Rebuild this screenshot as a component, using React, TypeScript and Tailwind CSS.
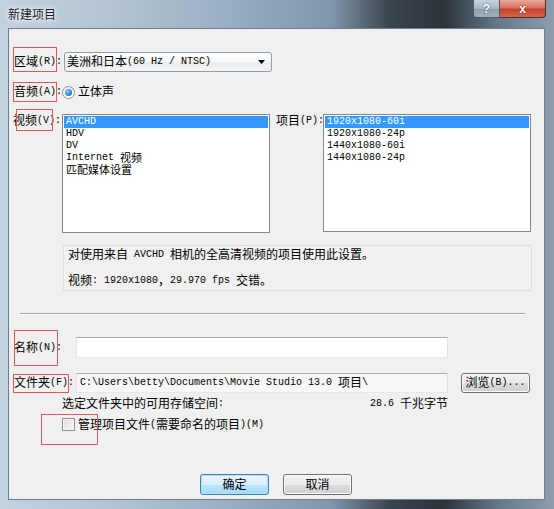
import React from "react";

const CJK = /([\u2E80-\u9FFF\u3000-\u303F\uFF00-\uFFEF]+)/;
const CJK_TEST = /^[\u2E80-\u9FFF\u3000-\u303F\uFF00-\uFFEF]+$/;

function Mix({ t, small }: { t: string; small?: boolean }) {
  return (
    <span className="inline-flex items-center whitespace-nowrap h-[12px]">
      {t
        .split(CJK)
        .filter((p) => p.length > 0)
        .map((p, i) =>
          CJK_TEST.test(p) ? (
            <span
              key={i}
              className={
                small
                  ? "relative -top-[1px] font-['Noto_Sans_CJK_SC',sans-serif] text-[11px] leading-[11px]"
                  : "relative -top-[1px] font-['Noto_Sans_CJK_SC',sans-serif] text-[12px] leading-[12px]"
              }
            >
              {p}
            </span>
          ) : (
            <span key={i} className="font-['Liberation_Mono',monospace] text-[10px] leading-[12px] whitespace-pre">
              {p}
            </span>
          )
        )}
    </span>
  );
}

function RedBox({ cls }: { cls: string }) {
  return <div className={"absolute border border-[#e05a5a] pointer-events-none " + cls} />;
}

function ListBox({ items, w, h }: { items: string[]; w: string; h: string }) {
  return (
    <div className={"shrink-0 border border-[#828790] bg-white p-[1px] " + w + " " + h}>
      {items.map((it, i) => (
        <div
          key={i}
          className={
            i === 0
              ? "h-[12px] pl-[2px] bg-[#3399ff] text-white flex items-center"
              : "h-[12px] pl-[2px] text-black flex items-center"
          }
        >
          <Mix t={it} small />
        </div>
      ))}
    </div>
  );
}

function Btn({ label, primary }: { label: string; primary?: boolean }) {
  return (
    <div
      className={
        primary
          ? "w-[69px] h-[21px] rounded-[3px] border border-[#3c7fb1] bg-[linear-gradient(to_bottom,#eaf6fd_0%,#d9f0fc_50%,#bee6fd_51%,#a7d9f5_100%)] shadow-[inset_0_0_0_1px_#b5e3fb] flex items-center justify-center"
          : "w-[69px] h-[21px] rounded-[3px] border border-[#707070] bg-[linear-gradient(to_bottom,#f2f2f2_0%,#ebebeb_50%,#dddddd_51%,#cfcfcf_100%)] shadow-[inset_0_0_0_1px_#fcfcfc] flex items-center justify-center"
      }
    >
      <Mix t={label} />
    </div>
  );
}

export default function App() {
  return (
    <div className="relative w-[554px] h-[509px] overflow-hidden flex flex-col text-black bg-[linear-gradient(to_right,#c4d2df_0%,#b3c4d4_20%,#97adc1_42%,#7f95aa_60%,#3c4650_70%,#2b333b_80%,#66798b_90%,#8c9dae_100%)]">
      {/* title bar */}
      <div className="h-[28px] flex items-start shrink-0">
        <div className="ml-[8px] mt-[7px] text-[12px] leading-[14px] font-['Noto_Sans_CJK_SC',sans-serif] text-[#1a1a1a] [text-shadow:0_0_6px_#ffffff,0_0_3px_#ffffff]">
          新建项目
        </div>
        <div className="ml-auto mr-[8px] flex">
          <div className="w-[27px] h-[18px] border border-[#4b5a69] border-t-0 rounded-bl-[4px] bg-[linear-gradient(to_bottom,#c7d3de_0%,#a7b6c4_50%,#8e9fae_51%,#9fb0be_100%)] flex items-center justify-center text-white text-[12px] font-bold font-['Liberation_Sans',sans-serif] [text-shadow:0_0_2px_#304050]">
            ?
          </div>
          <div className="w-[46px] h-[18px] border border-[#5b2a25] border-t-0 border-l-0 rounded-br-[4px] bg-[linear-gradient(to_bottom,#e9a99b_0%,#d9725f_45%,#c2402b_55%,#d3664d_100%)] flex items-center justify-center text-white text-[12px] font-bold font-['Liberation_Sans',sans-serif] [text-shadow:0_0_2px_#5a1a10]">
            x
          </div>
        </div>
      </div>

      {/* client area */}
      <div className="ml-[8px] w-[537px] h-[472px] shrink-0 border border-[#6d7d8c] bg-[#f0f0f0] flex flex-col">
        {/* region */}
        <div className="mt-[23px] h-[20px] flex items-center">
          <div className="w-[55px] shrink-0 pl-[5px] flex items-center">
            <Mix t="区域(R):" />
          </div>
          <div className="w-[208px] shrink-0 h-[20px] rounded-[3px] border border-[#8e9fb3] bg-[linear-gradient(to_bottom,#ffffff_0%,#f7f7f7_50%,#ececec_51%,#f3f3f3_100%)] flex items-center pl-[2px] pr-[6px]">
            <Mix t="美洲和日本(60 Hz / NTSC)" />
            <svg className="ml-auto" width="7" height="4" viewBox="0 0 7 4">
              <path d="M0 0 H7 L3.5 4 Z" fill="#000" />
            </svg>
          </div>
        </div>

        {/* audio */}
        <div className="mt-[12px] h-[16px] flex items-center">
          <div className="w-[53px] shrink-0 pl-[5px] flex items-center">
            <Mix t="音频(A):" />
          </div>
          <div className="w-[13px] h-[13px] shrink-0 rounded-full border border-[#8c98a6] bg-[linear-gradient(to_bottom,#e6e9ec,#ffffff)] flex items-center justify-center">
            <div className="w-[7px] h-[7px] rounded-full bg-[radial-gradient(circle_at_35%_35%,#9bd3ff_0%,#3f8bd6_50%,#1c5da8_100%)]" />
          </div>
          <div className="ml-[3px] flex items-center">
            <Mix t="立体声" />
          </div>
        </div>

        {/* video / project */}
        <div className="mt-[14px] flex items-start">
          <div className="w-[53px] shrink-0 pl-[4px] pt-[1px] flex items-center">
            <Mix t="视频(V):" />
          </div>
          <ListBox items={["AVCHD", "HDV", "DV", "Internet 视频", "匹配媒体设置"]} w="w-[208px]" h="h-[119px]" />
          <div className="ml-[6px] w-[47px] shrink-0 pt-[1px] flex items-center">
            <Mix t="项目(P):" />
          </div>
          <ListBox items={["1920x1080-60i", "1920x1080-24p", "1440x1080-60i", "1440x1080-24p"]} w="w-[208px]" h="h-[118px]" />
        </div>

        {/* info */}
        <div className="mt-[12px] ml-[54px] w-[469px] h-[46px] rounded-[2px] border border-[#d5dfe5] bg-[#f1f1f1] pl-[4px] pt-[3px]">
          <div className="h-[12px] flex items-center">
            <Mix t="对使用来自 AVCHD 相机的全高清视频的项目使用此设置。" />
          </div>
          <div className="mt-[14px] h-[12px] flex items-center">
            <Mix t="视频: 1920x1080，29.970 fps 交错。" />
          </div>
        </div>

        {/* separator */}
        <div className="mt-[22px] ml-[11px] w-[505px] h-[2px] border-t border-[#a0a0a0] border-b border-b-white" />

        {/* name */}
        <div className="mt-[22px] h-[21px] flex items-center">
          <div className="w-[67px] shrink-0 pl-[5px] flex items-center">
            <Mix t="名称(N):" />
          </div>
          <div className="w-[372px] shrink-0 h-[21px] border border-[#abadb3] border-l-[#e2e3ea] border-r-[#dbdfe6] border-b-[#e3e9ef] bg-white" />
        </div>

        {/* folder */}
        <div className="mt-[15px] h-[20px] flex items-center">
          <div className="w-[67px] shrink-0 pl-[5px] flex items-center">
            <Mix t="文件夹(F):" />
          </div>
          <div className="w-[372px] shrink-0 h-[20px] border border-[#abadb3] border-l-[#e2e3ea] border-r-[#dbdfe6] border-b-[#e3e9ef] bg-[#f7f7f7] flex items-center pl-[3px]">
            <Mix t="C:\Users\betty\Documents\Movie Studio 13.0 项目\" />
          </div>
          <div className="ml-[13px] w-[69px] shrink-0 h-[20px] rounded-[3px] border border-[#707070] bg-[linear-gradient(to_bottom,#f2f2f2_0%,#ebebeb_50%,#dddddd_51%,#cfcfcf_100%)] shadow-[inset_0_0_0_1px_#fcfcfc] flex items-center justify-center">
            <Mix t="浏览(B)..." />
          </div>
        </div>

        {/* storage */}
        <div className="mt-[5px] ml-[53px] w-[386px] h-[12px] flex items-center justify-between">
          <div className="flex items-center">
            <Mix t="选定文件夹中的可用存储空间:" />
          </div>
          <div className="flex items-center">
            <Mix t="28.6 千兆字节" />
          </div>
        </div>

        {/* checkbox */}
        <div className="mt-[8px] ml-[53px] h-[13px] flex items-center">
          <div className="w-[13px] h-[13px] shrink-0 border border-[#8e8f8f] bg-[linear-gradient(to_bottom_right,#dcdcdc,#fafafa)] shadow-[inset_0_0_0_1px_#f4f4f4]" />
          <div className="ml-[3px] flex items-center">
            <Mix t="管理项目文件(需要命名的项目)(M)" />
          </div>
        </div>

        {/* buttons */}
        <div className="mt-[43px] ml-[191px] flex items-center gap-[14px]">
          <Btn label="确定" primary />
          <Btn label="取消" />
        </div>
      </div>

      {/* annotation boxes */}
      <RedBox cls="left-[13px] top-[47px] w-[44px] h-[25px]" />
      <RedBox cls="left-[13px] top-[82px] w-[44px] h-[20px]" />
      <RedBox cls="left-[16px] top-[109px] w-[37px] h-[22px]" />
      <RedBox cls="left-[14px] top-[330px] w-[44px] h-[36px]" />
      <RedBox cls="left-[13px] top-[374px] w-[56px] h-[19px]" />
      <RedBox cls="left-[41px] top-[414px] w-[57px] h-[31px]" />
    </div>
  );
}
